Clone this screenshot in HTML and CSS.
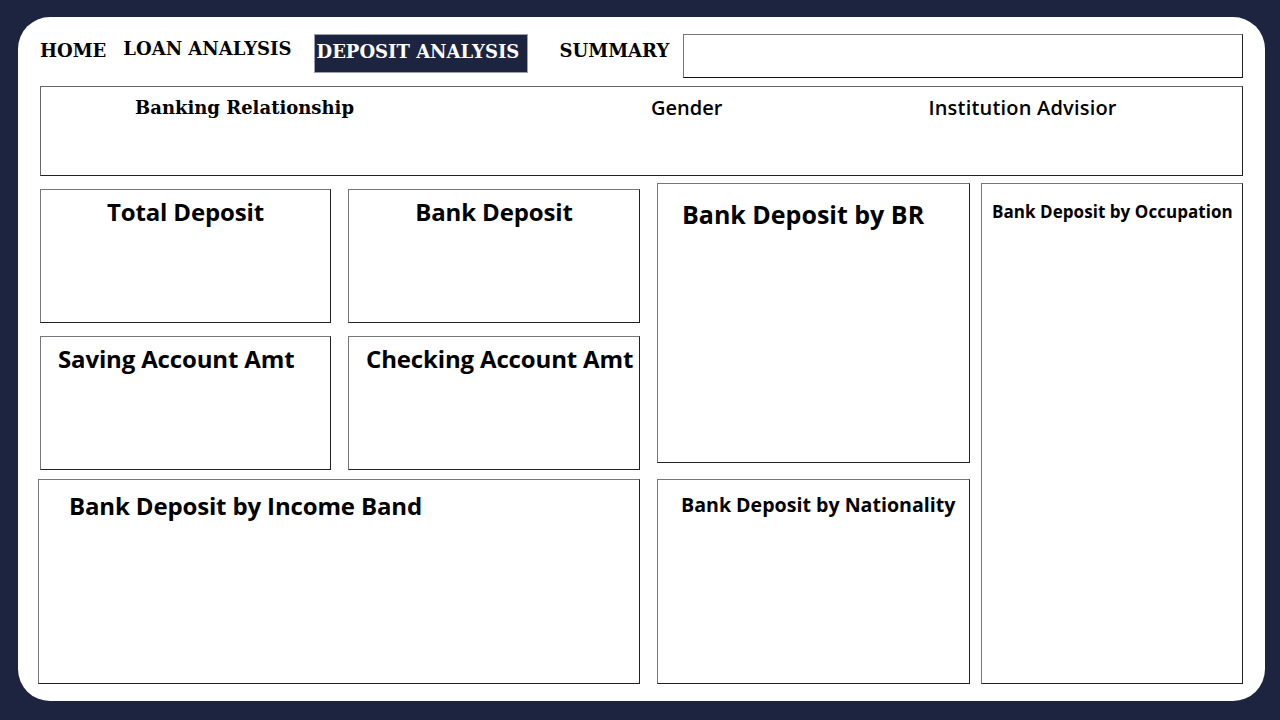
FILE: index.html
```html
<!DOCTYPE html>
<html lang="en">
<head>
<meta charset="utf-8">
<title>Deposit Analysis</title>
<link rel="stylesheet" href="styles.css">
</head>
<body>
<div class="card">
  <nav class="nav">
    <a class="nav-item home">HOME</a>
    <a class="nav-item loan">LOAN ANALYSIS</a>
    <a class="nav-item active">DEPOSIT ANALYSIS</a>
    <a class="nav-item summary">SUMMARY</a>
    <div class="search"></div>
  </nav>

  <section class="filters">
    <span class="f-br">Banking Relationship</span>
    <span class="f-gender">Gender</span>
    <span class="f-adv">Institution Advisior</span>
  </section>

  <main class="main">
    <div class="col-left">
      <div class="tiles">
        <div class="box tile center"><h2 class="t24">Total Deposit</h2></div>
        <div class="box tile center"><h2 class="t24">Bank Deposit</h2></div>
        <div class="box tile"><h2 class="t24 pl17">Saving Account Amt</h2></div>
        <div class="box tile"><h2 class="t24 pl17">Checking Account Amt</h2></div>
      </div>
      <div class="box income"><h2 class="t24 pl30">Bank Deposit by Income Band</h2></div>
    </div>
    <div class="col-mid">
      <div class="box br"><h2 class="t26">Bank Deposit by BR</h2></div>
      <div class="box nat"><h2 class="t20">Bank Deposit by Nationality</h2></div>
    </div>
    <div class="box occ"><h2 class="t17">Bank Deposit by Occupation</h2></div>
  </main>
</div>
</body>
</html>
```

FILE: styles.css
```css
* { box-sizing: border-box; }
html, body { margin: 0; padding: 0; }
body {
  width: 1280px;
  height: 720px;
  background: #1c2440;
  padding: 17px 15px 19px 18px;
  font-family: "Open Sans", "Liberation Sans", sans-serif;
  color: #000;
}
.card {
  width: 1247px;
  height: 684px;
  background: #fff;
  border-radius: 32px;
  padding: 17px 22px 0 22px;
}
.nav {
  display: flex;
  align-items: flex-start;
  height: 44px;
}
.nav-item {
  flex-shrink: 0;
  font-family: "DejaVu Serif", "Liberation Serif", serif;
  font-weight: 700;
  font-size: 18px;
  line-height: 20px;
  color: #000;
  white-space: nowrap;
}
.home { margin: 7px 0 0 0; }
.loan { margin: 5px 0 0 17px; }
.active {
  margin-left: 22px;
  background: #1c2440;
  color: #fff;
  width: 214px;
  height: 39px;
  padding: 7px 0 0 2px;
  border: 1px solid #9aa0ad;
}
.summary { margin: 7px 0 0 32px; }
.search {
  flex: 1;
  margin-left: 14px;
  height: 44px;
  border: 1px solid #777;
  border-bottom-color: #111;
  border-right-color: #222;
}
.filters {
  margin-top: 8px;
  height: 90px;
  border: 1px solid #666;
  border-bottom-color: #222;
  border-right-color: #222;
  display: flex;
  align-items: flex-start;
  padding-top: 9px;
}
.f-br {
  font-family: "DejaVu Serif", "Liberation Serif", serif;
  font-weight: 700;
  font-size: 18px;
  line-height: 24px;
  margin-left: 94px;
}
.f-gender, .f-adv {
  font-weight: 600;
  font-size: 20px;
  line-height: 24px;
}
.f-gender { margin-left: 297px; }
.f-adv { margin-left: 206px; letter-spacing: 0.2px; }
.main {
  margin-top: 7px;
  display: flex;
  align-items: flex-start;
  margin-left: -2px;
}
.box {
  border: 1px solid #777;
  border-bottom-color: #222;
  border-right-color: #222;
  background: #fff;
}
h2 { margin: 0; font-weight: 700; white-space: nowrap; color: #000; }
.t24 { font-size: 24px; line-height: 30px; letter-spacing: -0.15px; }
.t26 { font-size: 25px; line-height: 32px; }
.t20 { font-size: 19.6px; line-height: 26px; }
.t17 { font-size: 17px; line-height: 22px; letter-spacing: 0.05px; }
.col-left { width: 602px; margin-top: 6px; }
.tiles {
  display: grid;
  grid-template-columns: 291px 292px;
  grid-auto-rows: 134px;
  column-gap: 17px;
  row-gap: 13px;
  padding-left: 2px;
}
.tile { padding-top: 7px; }
.tile.center h2 { text-align: center; }
.pl17 { padding-left: 17px; }
.pl30 { padding-left: 30px; }
.income { margin-top: 9px; height: 205px; padding-top: 11px; }
.col-mid { margin-left: 17px; width: 313px; display: flex; flex-direction: column; gap: 16px; }
.br { height: 280px; padding: 14px 0 0 24px; }
.nat { height: 205px; padding: 12px 0 0 23px; }
.occ { margin-left: 11px; width: 262px; height: 501px; padding: 17px 0 0 10px; }
```
